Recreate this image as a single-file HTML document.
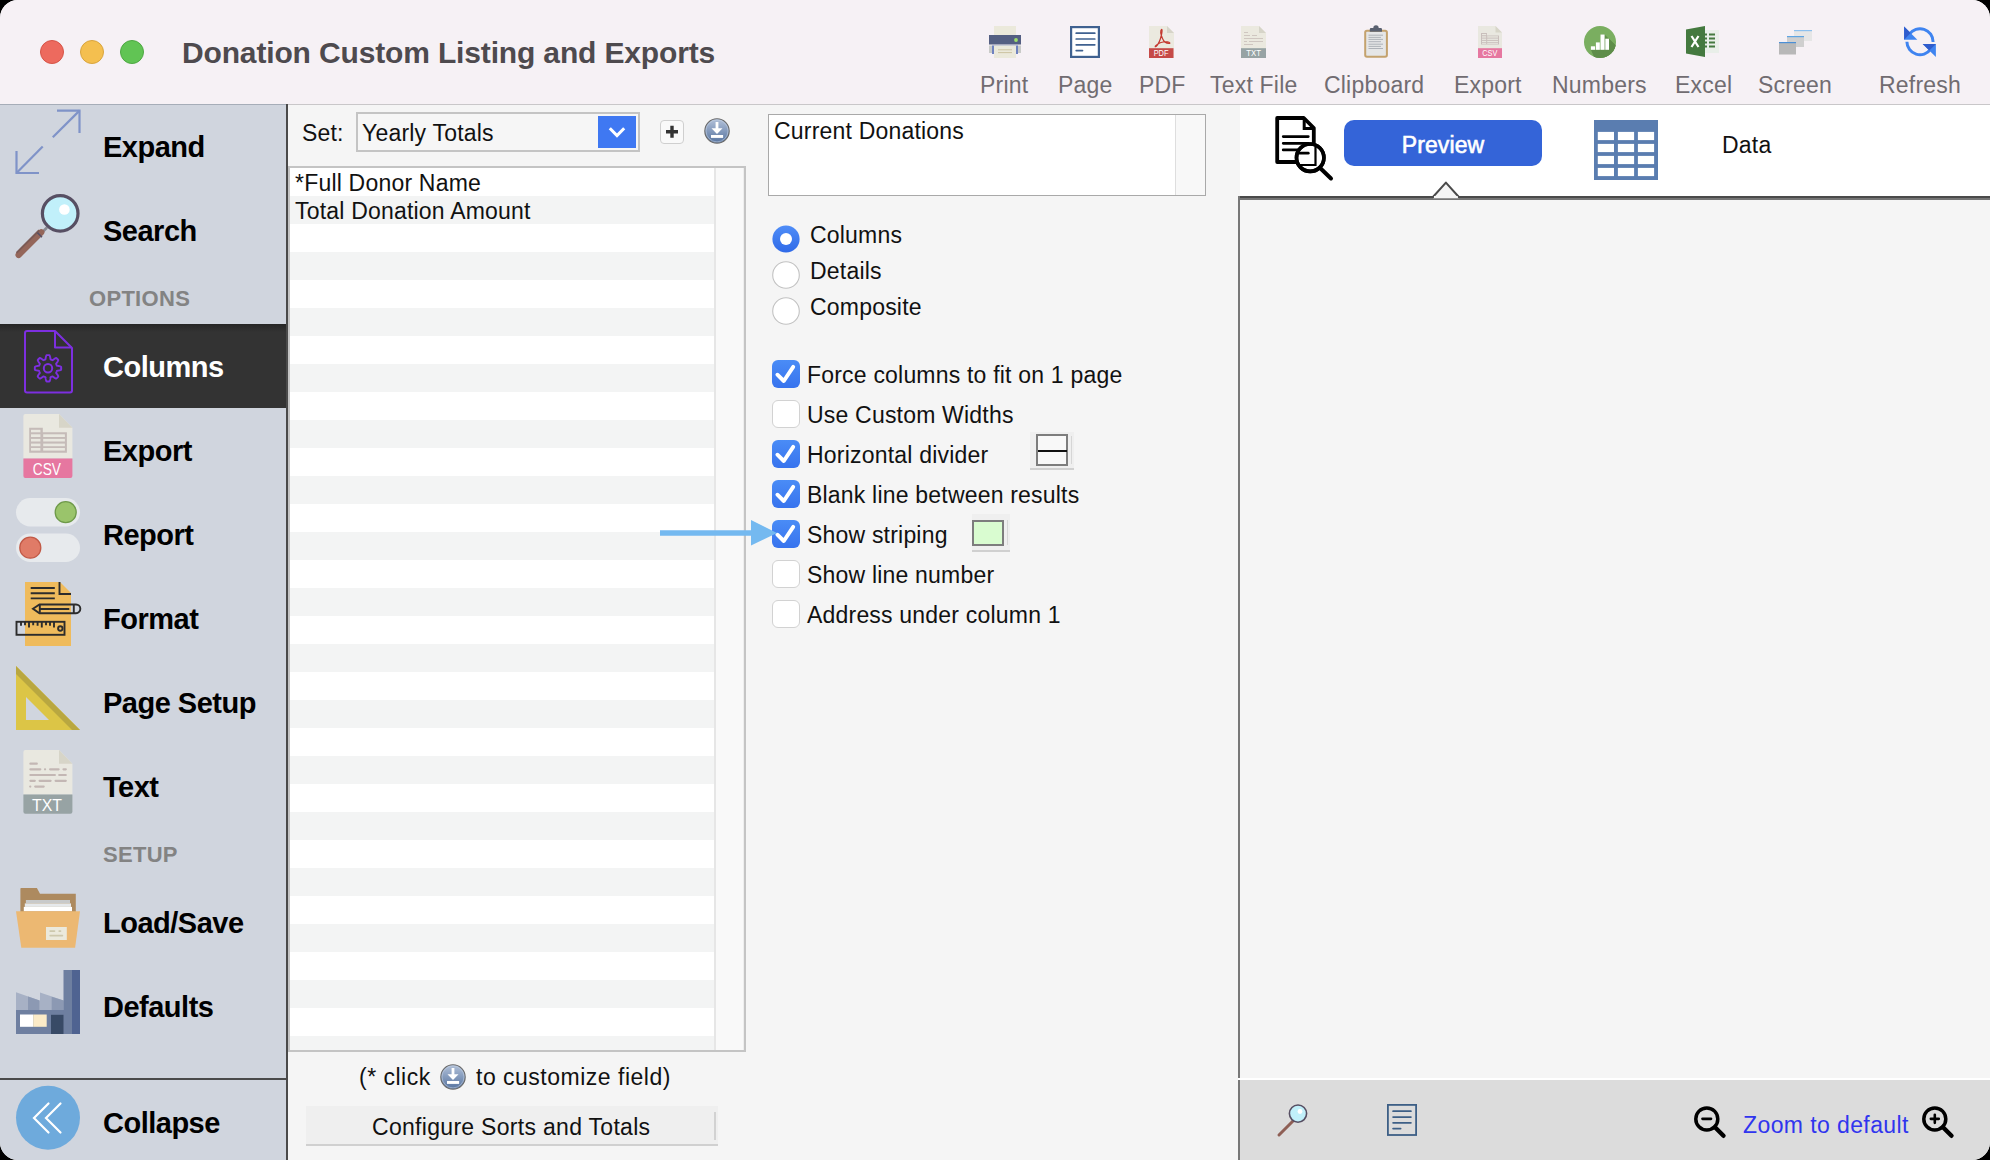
<!DOCTYPE html>
<html><head><meta charset="utf-8">
<style>
*{box-sizing:border-box;margin:0;padding:0}
html,body{width:1990px;height:1160px;overflow:hidden;background:#000}
body{font-family:"Liberation Sans",sans-serif;position:relative}
.abs{position:absolute}
#win{position:absolute;left:0;top:0;width:1990px;height:1160px;border-radius:18px;overflow:hidden;background:#f5f5f5}
#title{left:0;top:0;width:1990px;height:105px;background:#f6f1f5;border-bottom:1px solid #c9c7c9}
.tl{position:absolute;width:24px;height:24px;border-radius:50%;top:40px}
.ttl{position:absolute;left:182px;top:36px;font-size:30px;font-weight:700;color:#4e4a4e;letter-spacing:-0.15px;white-space:nowrap}
.tb{position:absolute;top:72px;font-size:23px;color:#716c71;white-space:nowrap;letter-spacing:0.2px}
.ti{position:absolute;top:26px;width:32px;height:32px}
#side{left:0;top:104px;width:286px;height:1056px;background:#d0d5de}
#sideline{left:286px;top:104px;width:2px;height:1056px;background:#4a4a4a}
.sl{position:absolute;left:103px;font-size:29px;font-weight:700;color:#000;white-space:nowrap;letter-spacing:-0.5px;line-height:34px}
.sh{position:absolute;font-size:22px;font-weight:700;color:#838383;letter-spacing:0.3px;white-space:nowrap}
.cbon{width:28px;height:28px;border-radius:6px;background:linear-gradient(#4a8cf6,#3773ee)}
.cboff{width:28px;height:28px;border-radius:6px;background:#fff;border:1px solid #d2d2d2}
.t22{font-size:23px;letter-spacing:0.2px;color:#111;white-space:nowrap;position:absolute}
</style></head>
<body>
<div id="win">
  <div id="title" class="abs">
    <div class="tl" style="left:40px;background:#ed6a5e;border:1px solid #d65447"></div>
    <div class="tl" style="left:80px;background:#f4bf4f;border:1px solid #d9a53e"></div>
    <div class="tl" style="left:120px;background:#61c454;border:1px solid #4ea843"></div>
    <div class="ttl">Donation Custom Listing and Exports</div>

    <!-- toolbar -->
    <div class="tb" style="left:980px">Print</div>
    <div class="tb" style="left:1058px">Page</div>
    <div class="tb" style="left:1139px">PDF</div>
    <div class="tb" style="left:1210px">Text File</div>
    <div class="tb" style="left:1324px">Clipboard</div>
    <div class="tb" style="left:1454px">Export</div>
    <div class="tb" style="left:1552px">Numbers</div>
    <div class="tb" style="left:1675px">Excel</div>
    <div class="tb" style="left:1758px">Screen</div>
    <div class="tb" style="left:1879px">Refresh</div>
    <svg class="abs" style="left:989px;top:26px" width="32" height="32" viewBox="0 0 32 32">
      <rect x="5" y="0" width="22" height="10" fill="#ebe9db"/>
      <rect x="0" y="9" width="32" height="9.5" fill="#545f82"/>
      <circle cx="27" cy="14" r="1.9" fill="#9ee06b"/>
      <rect x="0" y="19.5" width="32" height="7.5" fill="#c9cbc8"/>
      <rect x="3" y="19.5" width="26" height="8.5" fill="#6f82c0"/>
      <rect x="5" y="19.5" width="22" height="12.5" fill="#ebe9db"/>
      <path d="M9 23.8H23M9 26.6H23" stroke="#c8c09c" stroke-width="0.9"/>
    </svg>
    <svg class="abs" style="left:1070px;top:26px" width="30" height="32" viewBox="0 0 30 32">
      <rect x="1.1" y="1.1" width="27.8" height="29.8" fill="#fff" stroke="#3f6190" stroke-width="2.2"/>
      <path d="M6.2 7.2H24.8M6.2 13H24.8M6.2 18.8H24.8M6.2 24.6H12.5" stroke="#3f6190" stroke-width="1.7" stroke-linecap="round"/>
    </svg>
    <svg class="abs" style="left:1149px;top:26px" width="25" height="32" viewBox="0 0 25 32">
      <path d="M0 0H18L25 7V32H0Z" fill="#ebe9df"/><path d="M18 0V7H25Z" fill="#d6d4c8"/>
      <path d="M12.5 3.5C11 5 12 9 13.5 12.5C14.5 15 17 17.5 20 17.5C21.5 17.5 21 16 18.5 15.8C15 15.5 10 17 7.5 19C5.5 20.5 6 21.5 7.5 20C9.5 18 11.5 13 12.3 9.5C13 6.5 13.5 3 12.5 3.5Z" stroke="#c4382f" stroke-width="1.2" fill="none"/>
      <rect x="0" y="22.2" width="24.5" height="9.8" fill="#c64a48"/>
      <text x="4.7" y="30.3" font-family="Liberation Sans" font-size="8.4" fill="#fff" textLength="14.8" lengthAdjust="spacingAndGlyphs">PDF</text>
    </svg>
    <svg class="abs" style="left:1241px;top:26px" width="25" height="32" viewBox="0 0 25 32">
      <path d="M0 0H18L25 7V32H0Z" fill="#ebe9df"/><path d="M18 0V7H25Z" fill="#d6d4c8"/>
      <path d="M3 6.5H7M3 9.5H9M11 9.5H16M3 12.5H22M3 15.5H6M8 15.5H22M3 18.5H12" stroke="#cfc6c0" stroke-width="1"/>
      <rect x="0" y="22.2" width="25" height="9.8" fill="#97a3a4"/>
      <text x="5.3" y="30.3" font-family="Liberation Sans" font-size="8.4" fill="#fff" textLength="14.8" lengthAdjust="spacingAndGlyphs">TXT</text>
    </svg>
    <svg class="abs" style="left:1355px;top:20px" width="40" height="42" viewBox="1355 20 40 42">
      <rect x="1365.2" y="30.7" width="21.7" height="26.1" rx="1.8" fill="#e5e6e7" stroke="#c4a26e" stroke-width="2"/>
      <path d="M1368.5 35.2H1383M1368.5 37.4H1381M1368.5 39.4H1383M1368.5 41.7H1381M1368.5 44.2H1383M1368.5 46.4H1381M1368.5 48.5H1383" stroke="#a0a5ac" stroke-width="0.8"/>
      <path d="M1369.8 31.8V29.2Q1369.8 28 1371 28H1373.3A2.7 2.7 0 0 1 1378.7 28H1380.8Q1382 28 1382 29.2V31.8Z" fill="#5a6170"/>
    </svg>
    <svg class="abs" style="left:1478px;top:26px" width="24" height="32" viewBox="0 0 24 32">
      <path d="M0 0H17.5L24 6.5V32H0Z" fill="#e9e8e0"/><path d="M17.5 0V6.5H24Z" fill="#d7d5c8"/>
      <path d="M3 7H9V9.5H21V18.5H3Z" fill="#c9bfbc"/>
      <g fill="#e9e8e0"><rect x="4" y="8" width="4.2" height="1.2"/><rect x="4" y="10.3" width="4.2" height="1.3"/><rect x="9.2" y="10.3" width="10.8" height="1.3"/>
      <rect x="4" y="12.6" width="4.2" height="1.3"/><rect x="9.2" y="12.6" width="10.8" height="1.3"/><rect x="4" y="14.9" width="4.2" height="1.3"/><rect x="9.2" y="14.9" width="10.8" height="1.3"/>
      <rect x="4" y="17" width="4.2" height="0.8"/><rect x="9.2" y="17" width="10.8" height="0.8"/></g>
      <rect x="0" y="22.2" width="24" height="9.8" fill="#e677a0"/>
      <text x="4.3" y="29.8" font-family="Liberation Sans" font-size="8.4" fill="#fff" textLength="15" lengthAdjust="spacingAndGlyphs">CSV</text>
    </svg>
    <svg class="abs" style="left:1584px;top:25.6px" width="32" height="32" viewBox="1584 25.6 32 32">
      <defs><clipPath id="nc"><circle cx="1600" cy="41.6" r="16"/></clipPath></defs>
      <circle cx="1600" cy="41.6" r="16" fill="#7aae60"/>
      <path d="M1590.9 49.4H1609V38.3L1630 59V70H1600Z" fill="#5e8d49" clip-path="url(#nc)"/>
      <path d="M1600.5 34.1H1604.6L1616 45.5V60H1605Z" fill="#5e8d49" clip-path="url(#nc)" opacity="0.9"/>
      <g fill="#fff"><rect x="1590.9" y="45.9" width="4.2" height="3.5"/><rect x="1595.9" y="42" width="3.9" height="7.4"/><rect x="1600.5" y="34.1" width="4.1" height="15.3"/><rect x="1605.3" y="38.3" width="3.7" height="11.1"/></g>
    </svg>
    <svg class="abs" style="left:1686px;top:26px" width="33" height="31" viewBox="0 0 33 31">
      <rect x="14" y="4" width="19" height="23" fill="#e9efe9"/>
      <path d="M18 8.5H21M23 8.5H29M18 12.5H21M23 12.5H29M18 16.5H21M23 16.5H29M18 20.5H21M23 20.5H29" stroke="#44793f" stroke-width="2"/>
      <path d="M0 3.5L19 0V31L0 27.5Z" fill="#44793f"/>
      <path d="M5.5 10L12.5 21M12.5 10L5.5 21" stroke="#fff" stroke-width="2.2"/>
    </svg>
    <svg class="abs" style="left:1779px;top:30px" width="33" height="25" viewBox="0 0 33 25">
      <rect x="15" y="0" width="18" height="11" fill="#e6e6e6"/><rect x="15" y="0" width="18" height="1.2" fill="#8cc0ef"/>
      <rect x="8" y="6" width="17" height="11" fill="#cfcfcf"/><rect x="8" y="6" width="17" height="1.2" fill="#5ea5e3"/>
      <rect x="0" y="12" width="17" height="12.5" fill="#b8b8b8"/><rect x="0" y="12" width="17" height="1.2" fill="#4b8fd6"/>
    </svg>
    <svg class="abs" style="left:1900px;top:22px" width="40" height="40" viewBox="1900 22 40 40">
      <path d="M1933.1 42A13.1 13.1 0 0 0 1909.3 34.2" stroke="#3f84f0" stroke-width="3" fill="none"/>
      <path d="M1906.9 41.7A13.1 13.1 0 0 0 1930.7 49.2" stroke="#3f84f0" stroke-width="3" fill="none"/>
      <path d="M1904.1 26.5V39.7H1917.3Z" fill="#3f84f0"/><path d="M1904.1 26.5V39.7L1910.6 33.1Z" fill="#2f5ccc"/>
      <path d="M1935.9 57.1V44.1H1922.7Z" fill="#3f84f0"/><path d="M1935.9 44.1H1922.7L1929.3 50.6Z" fill="#2f5ccc"/>
    </svg>
  </div>

  <div id="side" class="abs">
    <div class="abs" style="left:0;top:0;width:286px;height:1px;background:#a6adb8"></div>
    <!-- expand -->
    <svg class="abs" style="left:0;top:0" width="100" height="84" viewBox="0 104 100 84">
      <g stroke="#7f93c8" stroke-width="2.2" fill="none" stroke-linecap="butt">
        <path d="M57 110.6H79.5V133"/><path d="M79.5 110.6L52.8 137.3"/>
        <path d="M42.7 146.6L16.5 173"/><path d="M16.5 151V173H39"/>
      </g>
    </svg>
    <!-- search -->
    <svg class="abs" style="left:0;top:84px" width="100" height="84" viewBox="0 188 100 84">
      <line x1="47" y1="227.5" x2="41" y2="233.5" stroke="#8a8a92" stroke-width="2.6"/>
      <line x1="41.3" y1="232.3" x2="18.6" y2="255" stroke="#94665a" stroke-width="6.2" stroke-linecap="round"/>
      <line x1="39.2" y1="230.2" x2="16.5" y2="252.9" stroke="#7b5a55" stroke-width="2"/>
      <line x1="37.4" y1="232.6" x2="42" y2="237.2" stroke="#574f63" stroke-width="1.6"/>
      <circle cx="60.2" cy="213.4" r="17.8" fill="#c1f0fa" stroke="#574f63" stroke-width="3.2"/>
      <circle cx="64.4" cy="209.5" r="5.3" fill="#fff"/>
    </svg>
    <div class="sh" style="left:89px;top:286px;top:182px">OPTIONS</div>
    <!-- columns selected -->
    <div class="abs" style="left:0;top:220px;width:286px;height:84px;background:linear-gradient(#262626 0px,#333 8px,#333 100%)"></div>
    <svg class="abs" style="left:0;top:220px" width="100" height="84" viewBox="0 324 100 84">
      <g stroke="#7d2fe0" stroke-width="2" fill="none" stroke-linejoin="round">
        <path d="M27 331H55L72 348V390.5Q72 392.5 70 392.5H27Q25 392.5 25 390.5V333Q25 331 27 331Z"/><path d="M55 331V347.5H72"/>
        <circle cx="48" cy="368.3" r="4.2"/>
        <path d="M61.20 368.30 L61.20 368.65 L61.18 368.99 L61.16 369.34 L61.13 369.68 L60.79 369.98 L60.10 370.22 L59.36 370.41 L58.61 370.55 L57.87 370.67 L57.18 370.76 L56.82 370.91 L56.75 371.14 L56.67 371.37 L56.59 371.60 L56.50 371.82 L56.40 372.04 L56.30 372.26 L56.20 372.48 L56.09 372.69 L56.23 373.05 L56.65 373.60 L57.10 374.21 L57.52 374.85 L57.91 375.50 L58.23 376.15 L58.26 376.61 L58.04 376.87 L57.81 377.13 L57.57 377.39 L57.33 377.63 L57.09 377.87 L56.83 378.11 L56.57 378.34 L56.31 378.56 L55.85 378.53 L55.20 378.21 L54.55 377.82 L53.91 377.40 L53.30 376.95 L52.75 376.53 L52.39 376.39 L52.18 376.50 L51.96 376.60 L51.74 376.70 L51.52 376.80 L51.30 376.89 L51.07 376.97 L50.84 377.05 L50.61 377.12 L50.46 377.48 L50.37 378.17 L50.25 378.91 L50.11 379.66 L49.92 380.40 L49.68 381.09 L49.38 381.43 L49.04 381.46 L48.69 381.48 L48.35 381.50 L48.00 381.50 L47.65 381.50 L47.31 381.48 L46.96 381.46 L46.62 381.43 L46.32 381.09 L46.08 380.40 L45.89 379.66 L45.75 378.91 L45.63 378.17 L45.54 377.48 L45.39 377.12 L45.16 377.05 L44.93 376.97 L44.70 376.89 L44.48 376.80 L44.26 376.70 L44.04 376.60 L43.82 376.50 L43.61 376.39 L43.25 376.53 L42.70 376.95 L42.09 377.40 L41.45 377.82 L40.80 378.21 L40.15 378.53 L39.69 378.56 L39.43 378.34 L39.17 378.11 L38.91 377.87 L38.67 377.63 L38.43 377.39 L38.19 377.13 L37.96 376.87 L37.74 376.61 L37.77 376.15 L38.09 375.50 L38.48 374.85 L38.90 374.21 L39.35 373.60 L39.77 373.05 L39.91 372.69 L39.80 372.48 L39.70 372.26 L39.60 372.04 L39.50 371.82 L39.41 371.60 L39.33 371.37 L39.25 371.14 L39.18 370.91 L38.82 370.76 L38.13 370.67 L37.39 370.55 L36.64 370.41 L35.90 370.22 L35.21 369.98 L34.87 369.68 L34.84 369.34 L34.82 368.99 L34.80 368.65 L34.80 368.30 L34.80 367.95 L34.82 367.61 L34.84 367.26 L34.87 366.92 L35.21 366.62 L35.90 366.38 L36.64 366.19 L37.39 366.05 L38.13 365.93 L38.82 365.84 L39.18 365.69 L39.25 365.46 L39.33 365.23 L39.41 365.00 L39.50 364.78 L39.60 364.56 L39.70 364.34 L39.80 364.12 L39.91 363.91 L39.77 363.55 L39.35 363.00 L38.90 362.39 L38.48 361.75 L38.09 361.10 L37.77 360.45 L37.74 359.99 L37.96 359.73 L38.19 359.47 L38.43 359.21 L38.67 358.97 L38.91 358.73 L39.17 358.49 L39.43 358.26 L39.69 358.04 L40.15 358.07 L40.80 358.39 L41.45 358.78 L42.09 359.20 L42.70 359.65 L43.25 360.07 L43.61 360.21 L43.82 360.10 L44.04 360.00 L44.26 359.90 L44.48 359.80 L44.70 359.71 L44.93 359.63 L45.16 359.55 L45.39 359.48 L45.54 359.12 L45.63 358.43 L45.75 357.69 L45.89 356.94 L46.08 356.20 L46.32 355.51 L46.62 355.17 L46.96 355.14 L47.31 355.12 L47.65 355.10 L48.00 355.10 L48.35 355.10 L48.69 355.12 L49.04 355.14 L49.38 355.17 L49.68 355.51 L49.92 356.20 L50.11 356.94 L50.25 357.69 L50.37 358.43 L50.46 359.12 L50.61 359.48 L50.84 359.55 L51.07 359.63 L51.30 359.71 L51.52 359.80 L51.74 359.90 L51.96 360.00 L52.18 360.10 L52.39 360.21 L52.75 360.07 L53.30 359.65 L53.91 359.20 L54.55 358.78 L55.20 358.39 L55.85 358.07 L56.31 358.04 L56.57 358.26 L56.83 358.49 L57.09 358.73 L57.33 358.97 L57.57 359.21 L57.81 359.47 L58.04 359.73 L58.26 359.99 L58.23 360.45 L57.91 361.10 L57.52 361.75 L57.10 362.39 L56.65 363.00 L56.23 363.55 L56.09 363.91 L56.20 364.12 L56.30 364.34 L56.40 364.56 L56.50 364.78 L56.59 365.00 L56.67 365.23 L56.75 365.46 L56.82 365.69 L57.18 365.84 L57.87 365.93 L58.61 366.05 L59.36 366.19 L60.10 366.38 L60.79 366.62 L61.13 366.92 L61.16 367.26 L61.18 367.61 L61.20 367.95Z" stroke-width="1.9"/>
      </g>
    </svg>
    <!-- export csv -->
    <svg class="abs" style="left:0;top:304px" width="100" height="84" viewBox="0 408 100 84">
      <path d="M25.4 414H59L72.4 427.8V458.5H23.4V416Q23.4 414 25.4 414Z" fill="#e9e8e0"/>
      <path d="M59 414V427.8H72.4Z" fill="#d7d5c8"/>
      <path d="M29.2 427.8H42.8V432.2H66.9V452.7H29.2Z" fill="#c5bbb8"/>
      <g fill="#e9e8e0">
        <rect x="31" y="429.8" width="9.4" height="2.5"/>
        <rect x="31" y="434.3" width="9.4" height="2.7"/><rect x="43.2" y="434.3" width="21.7" height="2.7"/>
        <rect x="31" y="438.9" width="9.4" height="2.6"/><rect x="43.2" y="438.9" width="21.7" height="2.6"/>
        <rect x="31" y="443.6" width="9.4" height="2.6"/><rect x="43.2" y="443.6" width="21.7" height="2.6"/>
        <rect x="31" y="448" width="9.4" height="2.6"/><rect x="43.2" y="448" width="21.7" height="2.6"/>
      </g>
      <path d="M23.4 458.4H72.4V476Q72.4 478 70.4 478H25.4Q23.4 478 23.4 476Z" fill="#e677a0"/>
      <text x="32.8" y="474.7" font-family="Liberation Sans" font-size="16.3" fill="#fff" textLength="28.2" lengthAdjust="spacingAndGlyphs">CSV</text>
    </svg>
    <!-- report toggles -->
    <svg class="abs" style="left:0;top:388px" width="100" height="84" viewBox="0 492 100 84">
      <rect x="16" y="498" width="64" height="28.5" rx="14.2" fill="#e7eaed"/>
      <circle cx="65.7" cy="512.2" r="10.5" fill="#9ac46b" stroke="#6e9a49" stroke-width="1.3"/>
      <rect x="16" y="533.5" width="64" height="28.5" rx="14.2" fill="#e7eaed"/>
      <circle cx="30.3" cy="547.7" r="10.5" fill="#e07b67" stroke="#c25946" stroke-width="1.3"/>
    </svg>
    <!-- format -->
    <svg class="abs" style="left:0;top:472px" width="100" height="84" viewBox="0 576 100 84">
      <path d="M25 582H60L71 593V646H25Z" fill="#efbb5c"/>
      <g stroke="#2c2c2c" stroke-width="1.9" fill="none">
        <path d="M59.5 582V594H71"/>
        <path d="M30.7 588H54.8M30.7 593.2H54.8M30.7 598.4H54.8"/>
        <path d="M33 608.8L39.5 604.5H76A4.3 4.3 0 0 1 76 613.2H39.5Z"/><path d="M39.8 605V612.8M73.8 604.5V613.2M40.3 609H69.3"/>
        <rect x="16.5" y="621.8" width="48" height="13"/>
        <path d="M21 621.8v4M25 621.8v3.5M29 621.8v5.8M33.2 621.8v3.5M37.6 621.8v4M41.8 621.8v5.8M46 621.8v3.5M50 621.8v4M54 621.8v5.8"/>
        <circle cx="60.3" cy="628.5" r="2.2"/>
      </g>
    </svg>
    <!-- page setup -->
    <svg class="abs" style="left:0;top:556px" width="100" height="84" viewBox="0 660 100 84">
      <path d="M16 666V730H80Z" fill="#dcc546"/>
      <path d="M16 666L80 730H72L16 674Z" fill="#b9a740"/>
      <path d="M26 697V720H49Z" fill="#d0d5de"/>
    </svg>
    <!-- text txt -->
    <svg class="abs" style="left:0;top:640px" width="100" height="84" viewBox="0 744 100 84">
      <path d="M25.4 750H59L72.4 763.8V794.5H23.4V752Q23.4 750 25.4 750Z" fill="#e9e8e0"/>
      <path d="M59 750V763.8H72.4Z" fill="#d7d5c8"/>
      <g stroke="#c3b7b4" stroke-width="2.2" stroke-linecap="round">
        <path d="M30.4 763.7H36.8M30.4 769.3H40.3M45 769.3H45.1M50.1 769.3H58.6M63.5 769.3H65.8M30.4 775H54.9M59.2 775H65.8M30.4 780.8H34.8M39.6 780.8H50.6M55.6 780.8H65.8M30.2 786.6H30.3M35.2 786.6H43.7"/>
      </g>
      <path d="M23.4 794.5H72.4V811.8Q72.4 813.8 70.4 813.8H25.4Q23.4 813.8 23.4 811.8Z" fill="#97a3a4"/>
      <text x="32" y="810.7" font-family="Liberation Sans" font-size="16.3" fill="#fff" textLength="30" lengthAdjust="spacingAndGlyphs">TXT</text>
    </svg>
    <div class="sh" style="left:103px;top:738px">SETUP</div>
    <!-- load/save -->
    <svg class="abs" style="left:0;top:776px" width="100" height="84" viewBox="0 880 100 84">
      <path d="M21 888H36.9L40 893.8H75.8V912H20.4V888.6Z" fill="#ad8a5f"/>
      <rect x="25.9" y="900" width="44.1" height="3.4" fill="#c8cacb"/>
      <rect x="24.8" y="903.4" width="46.2" height="3.5" fill="#e6e9ec"/>
      <rect x="23.8" y="906.9" width="48.2" height="4.5" fill="#ffffff"/>
      <path d="M16 911.2H80L75.1 947.7H21.3Z" fill="#ecb872"/>
      <rect x="46" y="927" width="20.8" height="13" fill="#ebe9dc"/>
      <path d="M50.2 931.1H54.5M59.2 931.1H60.5M50.2 935.6H62.4" stroke="#cdc8ad" stroke-width="1.7" stroke-linecap="round"/>
    </svg>
    <!-- defaults -->
    <svg class="abs" style="left:0;top:860px" width="100" height="84" viewBox="0 964 100 84">
      <path d="M16 992.3L39.6 1000.6V1010H16ZM40 992.6L63.6 1000.6V1010H40Z" fill="#a7b1c5"/>
      <path d="M28 996.6L39.6 1000.6V1010H28ZM51.7 996.65L63.6 1000.6V1010H51.7Z" fill="#8c99b3"/>
      <rect x="16" y="1010" width="48" height="24" fill="#6e7fa0"/>
      <rect x="63.5" y="970" width="8.5" height="64" fill="#6e7fa0"/>
      <rect x="72" y="970" width="8" height="64" fill="#4f6391"/>
      <rect x="20" y="1014.5" width="13.2" height="12.3" fill="#fff"/>
      <rect x="33.2" y="1014.5" width="13.5" height="12.3" fill="#fbebc8"/>
      <rect x="51" y="1014.8" width="12.5" height="19.2" fill="#384a66"/>
    </svg>
    <div class="abs" style="left:0;top:974px;width:286px;height:2px;background:#4a4a4a"></div>
    <!-- collapse -->
    <svg class="abs" style="left:0;top:976px" width="100" height="80" viewBox="0 1080 100 80">
      <circle cx="48" cy="1117.7" r="32" fill="#6eaadc"/>
      <g stroke="#fff" stroke-width="2.2" fill="none" stroke-linecap="round">
        <path d="M48.5 1103.5L34 1118L48.5 1132.5"/><path d="M60.5 1103.5L46 1118L60.5 1132.5"/>
      </g>
    </svg>
    <div class="sl" style="top:26px">Expand</div>
    <div class="sl" style="top:110px">Search</div>
    <div class="sl" style="top:246px;color:#fff">Columns</div>
    <div class="sl" style="top:330px">Export</div>
    <div class="sl" style="top:414px">Report</div>
    <div class="sl" style="top:498px">Format</div>
    <div class="sl" style="top:582px">Page Setup</div>
    <div class="sl" style="top:666px">Text</div>
    <div class="sl" style="top:802px">Load/Save</div>
    <div class="sl" style="top:886px">Defaults</div>
    <div class="sl" style="top:1002px">Collapse</div>
  </div>

  <!-- middle panel -->
  <div class="abs" style="left:288px;top:105px;width:950px;height:1055px;background:#f5f5f5"></div>
  <div class="t22" style="left:302px;top:120px">Set:</div>
  <div class="abs" style="left:356px;top:112px;width:284px;height:40px;border:2px solid #c4c4c4;background:#f6f6f6"></div>
  <div class="t22" style="left:362px;top:120px">Yearly Totals</div>
  <div class="abs" style="left:598px;top:116px;width:38px;height:32px;background:#3f78f2"></div>
  <svg class="abs" style="left:598px;top:116px" width="38" height="32"><path d="M11.8 12.2L19 19.6L26.2 12.2" stroke="#fff" stroke-width="3" fill="none"/></svg>
  <div class="abs" style="left:660px;top:120px;width:24px;height:24px;border:1px solid #cfcfcf;border-radius:4px;background:#f9f9f9"></div>
  <svg class="abs" style="left:660px;top:120px" width="24" height="24"><path d="M6 11.8H18M12 5.8V17.8" stroke="#333" stroke-width="3.4"/></svg>
  <svg class="abs" style="left:702px;top:116px" width="30" height="30" viewBox="0 0 30 30">
    <defs><linearGradient id="dg" x1="0" y1="0" x2="0" y2="1"><stop offset="0" stop-color="#b3c2da"/><stop offset="1" stop-color="#56739f"/></linearGradient></defs>
    <circle cx="15" cy="14.9" r="12.2" fill="url(#dg)" stroke="#6a6a6a" stroke-width="1.1"/>
    <circle cx="15" cy="14.9" r="11" fill="none" stroke="#c4d0e3" stroke-width="0.8" opacity="0.7"/>
    <rect x="13.6" y="6" width="2.8" height="7" fill="#fff"/>
    <path d="M9.5 12.2H20.5L15 17.9Z" fill="#fff"/>
    <rect x="9" y="19" width="12.1" height="2.9" fill="#fff"/>
  </svg>
  <!-- list -->
  <div class="abs" style="left:288px;top:166px;width:458px;height:886px;border:2px solid #c4c4c4;background:repeating-linear-gradient(#fff 0px,#fff 28px,#f3f4f4 28px,#f3f4f4 56px)"></div>
  <div class="abs" style="left:714px;top:168px;width:30px;height:882px;background:#f9f9f9;border-left:2px solid #e6e6e6;border-right:1.5px solid #eeeeee"></div>
  <div class="t22" style="left:295px;top:170px">*Full Donor Name</div>
  <div class="t22" style="left:295px;top:198px">Total Donation Amount</div>
  <div class="t22" style="left:359px;top:1064px;letter-spacing:0.5px">(* click</div>
  <svg class="abs" style="left:439px;top:1063px" width="28" height="28" viewBox="1 1 28 28">
    <circle cx="15" cy="14.9" r="12.2" fill="url(#dg)" stroke="#6a6a6a" stroke-width="1.1"/>
    <circle cx="15" cy="14.9" r="11" fill="none" stroke="#c4d0e3" stroke-width="0.8" opacity="0.7"/>
    <rect x="13.6" y="6" width="2.8" height="7" fill="#fff"/>
    <path d="M9.5 12.2H20.5L15 17.9Z" fill="#fff"/>
    <rect x="9" y="19" width="12.1" height="2.9" fill="#fff"/>
  </svg>
  <div class="t22" style="left:476px;top:1064px;letter-spacing:0.5px">to customize field)</div>
  <div class="abs" style="left:306px;top:1106px;width:412px;height:40px;background:#efefef;border-bottom:2px solid #d0d0d0"></div>
  <div class="abs" style="left:714px;top:1112px;width:2px;height:28px;background:#d2d2d2"></div>
  <div class="t22" style="left:372px;top:1114px;letter-spacing:0.3px">Configure Sorts and Totals</div>
  <!-- options column -->
  <div class="abs" style="left:768px;top:114px;width:438px;height:82px;border:1px solid #a9a9a9;background:#fff"></div>
  <div class="abs" style="left:1175px;top:115px;width:30px;height:80px;background:#f8f8f8;border-left:1px solid #dedede"></div>
  <div class="t22" style="left:774px;top:118px">Current Donations</div>
  <svg class="abs" style="left:770px;top:220px" width="40" height="110">
    <defs><linearGradient id="rb" x1="0" y1="0" x2="0" y2="1"><stop offset="0" stop-color="#4f8df7"/><stop offset="1" stop-color="#2f6ae8"/></linearGradient></defs>
    <circle cx="16" cy="19" r="13.6" fill="url(#rb)"/>
    <circle cx="16" cy="19" r="6" fill="#fff"/>
    <circle cx="16" cy="55" r="13.3" fill="#fff" stroke="#c2c2c2" stroke-width="1.1"/>
    <circle cx="16" cy="91" r="13.3" fill="#fff" stroke="#c2c2c2" stroke-width="1.1"/>
  </svg>
  <div class="t22" style="left:810px;top:222px">Columns</div>
  <div class="t22" style="left:810px;top:258px">Details</div>
  <div class="t22" style="left:810px;top:294px">Composite</div>
  <div class="abs cbon" style="left:772px;top:360px"></div>
  <svg class="abs" style="left:772px;top:360px" width="28" height="28"><path d="M5.4 14.7L11.8 21L21.2 6.8" stroke="#fff" stroke-width="3.9" fill="none" stroke-linecap="round" stroke-linejoin="round"/></svg>
  <div class="t22" style="left:807px;top:362px">Force columns to fit on 1 page</div>
  <div class="abs cboff" style="left:772px;top:400px"></div>
  <div class="t22" style="left:807px;top:402px">Use Custom Widths</div>
  <div class="abs cbon" style="left:772px;top:440px"></div>
  <svg class="abs" style="left:772px;top:440px" width="28" height="28"><path d="M5.4 14.7L11.8 21L21.2 6.8" stroke="#fff" stroke-width="3.9" fill="none" stroke-linecap="round" stroke-linejoin="round"/></svg>
  <div class="t22" style="left:807px;top:442px">Horizontal divider</div>
  <div class="abs cbon" style="left:772px;top:480px"></div>
  <svg class="abs" style="left:772px;top:480px" width="28" height="28"><path d="M5.4 14.7L11.8 21L21.2 6.8" stroke="#fff" stroke-width="3.9" fill="none" stroke-linecap="round" stroke-linejoin="round"/></svg>
  <div class="t22" style="left:807px;top:482px">Blank line between results</div>
  <div class="abs cbon" style="left:772px;top:520px"></div>
  <svg class="abs" style="left:772px;top:520px" width="28" height="28"><path d="M5.4 14.7L11.8 21L21.2 6.8" stroke="#fff" stroke-width="3.9" fill="none" stroke-linecap="round" stroke-linejoin="round"/></svg>
  <div class="t22" style="left:807px;top:522px">Show striping</div>
  <div class="abs cboff" style="left:772px;top:560px"></div>
  <div class="t22" style="left:807px;top:562px">Show line number</div>
  <div class="abs cboff" style="left:772px;top:600px"></div>
  <div class="t22" style="left:807px;top:602px">Address under column 1</div>
  <div class="abs" style="left:1030px;top:432px;width:44px;height:38px;background:#efefef;border-bottom:2px solid #d0d0d0"></div>
  <div class="abs" style="left:1070.5px;top:436px;width:1.5px;height:28px;background:#d6d6d6"></div>
  <div class="abs" style="left:1036px;top:434.3px;width:32px;height:31.6px;border:2px solid #7d7d7d;background:#f8f8f8"></div>
  <div class="abs" style="left:1037.5px;top:450.2px;width:29px;height:2px;background:#111"></div>
  <div class="abs" style="left:972px;top:514.2px;width:38px;height:37.4px;background:#efefef;border-bottom:2px solid #d0d0d0"></div>
  <div class="abs" style="left:1006.5px;top:520px;width:1.5px;height:25px;background:#d6d6d6"></div>
  <div class="abs" style="left:972px;top:520px;width:31.8px;height:25.6px;border:2px solid #7d7d7d;background:#d9fcd0"></div>
  <svg class="abs" style="left:655px;top:515px" width="130" height="36"><path d="M5 18H97" stroke="#74b9f0" stroke-width="5.5"/><path d="M96 5L122 18L96 30.5Z" fill="#74b9f0"/></svg>

  <!-- right panel -->
  <div class="abs" style="left:1240px;top:105px;width:750px;height:91px;background:#fff"></div>
  <svg class="abs" style="left:1265px;top:108px" width="80" height="80" viewBox="1265 108 80 80">
    <path d="M1277.2 118H1303.8L1313.8 128V162H1277.2Z" stroke="#000" stroke-width="3.8" fill="#fff" stroke-linejoin="round"/>
    <path d="M1304.2 119V128.5H1313" stroke="#000" stroke-width="3" fill="none"/>
    <path d="M1283.2 136.6H1308.3M1283.2 143.3H1308.3M1283.2 149.9H1308.3" stroke="#000" stroke-width="2.7" stroke-linecap="round"/>
    <circle cx="1310.2" cy="157.7" r="13.7" stroke="#000" stroke-width="3.6" fill="#fff"/>
    <path d="M1299 153.2H1308.3" stroke="#000" stroke-width="2.7" stroke-linecap="round"/>
    <path d="M1315.5 146V165H1300" stroke="#000" stroke-width="2.2" fill="none"/>
    <circle cx="1310.2" cy="157.7" r="13.7" stroke="#000" stroke-width="3.6" fill="none"/>
    <path d="M1320.9 168.7L1331 178.5" stroke="#000" stroke-width="4" stroke-linecap="round"/>
  </svg>
  <div class="abs" style="left:1344px;top:120px;width:198px;height:46px;border-radius:10px;background:#3464d8"></div>
  <div class="abs" style="left:1344px;top:132px;width:198px;text-align:center;font-size:23px;font-weight:400;-webkit-text-stroke:0.6px #fff;color:#fff;letter-spacing:0.1px">Preview</div>
  <svg class="abs" style="left:1594px;top:120px" width="64" height="60" viewBox="0 0 64 60">
    <rect x="0" y="0" width="64" height="60" fill="#5a7db0"/>
    <g fill="#fff"><rect x="3.8" y="11.9" width="16.2" height="8.2"/><rect x="23.9" y="11.9" width="16.2" height="8.2"/><rect x="43.9" y="11.9" width="16.2" height="8.2"/><rect x="3.8" y="23.9" width="16.2" height="8.2"/><rect x="23.9" y="23.9" width="16.2" height="8.2"/><rect x="43.9" y="23.9" width="16.2" height="8.2"/><rect x="3.8" y="35.9" width="16.2" height="8.2"/><rect x="23.9" y="35.9" width="16.2" height="8.2"/><rect x="43.9" y="35.9" width="16.2" height="8.2"/><rect x="3.8" y="47.9" width="16.2" height="8.2"/><rect x="23.9" y="47.9" width="16.2" height="8.2"/><rect x="43.9" y="47.9" width="16.2" height="8.2"/></g>
  </svg>
  <div class="t22" style="left:1722px;top:132px">Data</div>
  <div class="abs" style="left:1238px;top:196px;width:752px;height:2px;background:#4a4a4a"></div>
  <div class="abs" style="left:1238px;top:198px;width:752px;height:1.6px;background:#757575"></div>
  <div class="abs" style="left:1238px;top:196px;width:2px;height:882px;background:#777"></div>
  <div class="abs" style="left:1240px;top:199.6px;width:750px;height:878.4px;background:#f5f5f5"></div>
  <svg class="abs" style="left:1428px;top:178px" width="36" height="22" viewBox="1428 178 36 22"><path d="M1433 198.2L1445.9 183.2L1458.8 198.2Z" fill="#f5f5f5"/><path d="M1432.5 197.5L1445.9 182.6L1459.3 197.5" stroke="#4a4a4a" stroke-width="2" fill="none" stroke-linejoin="round"/><rect x="1434" y="196" width="23.8" height="2" fill="#f5f5f5"/></svg>
  <div class="abs" style="left:1238px;top:1078px;width:752px;height:2px;background:#fff"></div>
  <div class="abs" style="left:1238px;top:1080px;width:2px;height:80px;background:#777"></div>
  <div class="abs" style="left:1240px;top:1080px;width:750px;height:80px;background:#dcdcdc"></div>
  <svg class="abs" style="left:1270px;top:1098px" width="44" height="44" viewBox="0 0 44 44">
    <line x1="24" y1="22" x2="9" y2="37" stroke="#8e5f55" stroke-width="3" stroke-linecap="round"/>
    <circle cx="28" cy="15.6" r="8.6" fill="#c1f0fa" stroke="#574f63" stroke-width="1.6"/>
    <circle cx="30" cy="13.5" r="2.4" fill="#fff"/>
  </svg>
  <svg class="abs" style="left:1386px;top:1103px" width="32" height="34" viewBox="1386 1103 32 34">
    <rect x="1387.9" y="1104.9" width="28.2" height="30.1" fill="none" stroke="#3d5f86" stroke-width="1.8"/>
    <path d="M1393.1 1111.2H1410.9M1393.1 1117.1H1410.9M1393.1 1122.8H1410.9M1393.1 1128.6H1400.6" stroke="#3d5f86" stroke-width="1.8" stroke-linecap="round"/>
  </svg>
  <svg class="abs" style="left:1692px;top:1104px" width="36" height="36" viewBox="0 0 36 36">
    <circle cx="14.8" cy="14.9" r="11" stroke="#000" stroke-width="3.5" fill="none"/>
    <path d="M10.5 14.85H19" stroke="#000" stroke-width="2.7" stroke-linecap="round"/>
    <path d="M23 23.2L31.5 31.8" stroke="#000" stroke-width="4.4" stroke-linecap="round"/>
  </svg>
  <div class="t22" style="left:1743px;top:1112px;color:#3035ee;letter-spacing:0.4px">Zoom to default</div>
  <svg class="abs" style="left:1920px;top:1104px" width="36" height="36" viewBox="0 0 36 36">
    <circle cx="14.8" cy="14.9" r="11" stroke="#000" stroke-width="3.5" fill="none"/>
    <path d="M10.8 14.85H18.8M14.8 10.85V18.85" stroke="#000" stroke-width="2.6" stroke-linecap="round"/>
    <path d="M23 23.2L31.5 31.8" stroke="#000" stroke-width="4.4" stroke-linecap="round"/>
  </svg>
  <div id="sideline" class="abs"></div>
</div>
</body></html>
